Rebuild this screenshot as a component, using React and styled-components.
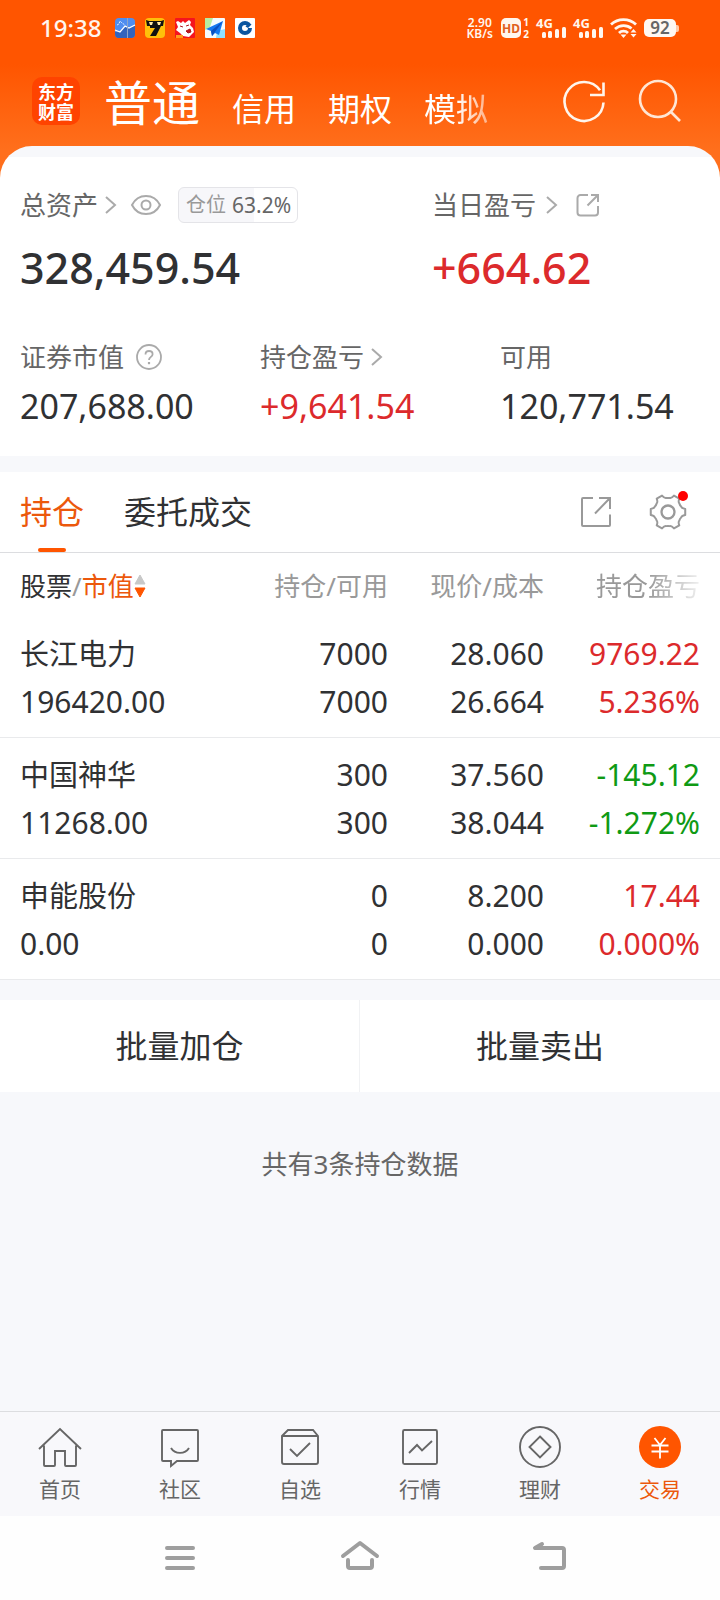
import React from "react";
import styled, { createGlobalStyle, css } from "styled-components";

const color = {
  brand: "#ff5500",
  brandText: "#ec580c",
  ink: "#303133",
  label: "#666666",
  muted: "#999999",
  icon: "#aaaaaa",
  up: "#dc2a2c",
  down: "#0f9a14",
  page: "#f7f8fb",
  line: "#dcdde0",
};

const tones = { up: color.up, down: color.down, ink: color.ink };

const GlobalStyle = createGlobalStyle`
  * { box-sizing: border-box; }
  body {
    margin: 0;
    background: ${color.page};
    color: ${color.ink};
    font-family: "Noto Sans", "Noto Sans CJK SC", sans-serif;
  }
  button, a { font: inherit; color: inherit; }
  svg { display: block; flex: none; overflow: visible; }
`;

const Screen = styled.div`
  display: flex;
  flex-direction: column;
  min-height: 100vh;
`;

/* ---------- header ---------- */

const Hero = styled.div`
  background: linear-gradient(#ff5500 64px, #ff6f1c 150px);
`;

const StatusBar = styled.div`
  display: flex;
  align-items: center;
  justify-content: space-between;
  height: 56px;
  padding: 0 40px;
  color: #fff6ee;
`;

const StatusGroup = styled.div`
  display: flex;
  align-items: center;
  gap: ${(p) => p.$gap}px;
`;

const Clock = styled.span`
  margin-right: 4px;
  font-size: 24px;
  font-weight: 500;
  line-height: 28px;
`;

const Speed = styled.div`
  display: flex;
  flex-direction: column;
  align-items: center;
  margin-right: 2px;
  font-size: 12px;
  font-weight: 600;
  line-height: 11px;
`;

const Battery = styled.div`
  position: relative;
  width: 32px;
  height: 18px;
  margin-right: 4px;
  border-radius: 5px;
  background: #fff8f2;
  color: #666;
  font-size: 17px;
  font-weight: 600;
  line-height: 18px;
  text-align: center;

  &::after {
    content: "";
    position: absolute;
    left: 32px;
    top: 6px;
    width: 3px;
    height: 7px;
    border-radius: 0 2px 2px 0;
    background: #ffc9a8;
  }
`;

const TitleBar = styled.header`
  display: flex;
  align-items: center;
  height: 90px;
  padding: 0 38px 0 32px;
  color: #fff;
`;

const Logo = styled.div`
  width: 48px;
  height: 48px;
  padding-top: 4px;
  border-radius: 10px;
  background: #ff4300;
  font-family: "Noto Sans CJK SC", sans-serif;
  font-size: 18px;
  font-weight: 700;
  line-height: 20px;
  text-align: center;
`;

const AccountTabs = styled.nav`
  display: flex;
  align-items: baseline;
  gap: 32px;
  margin-left: 24px;
  padding-top: 10px;
`;

const AccountTab = styled.button`
  padding: 0;
  border: 0;
  background: none;
  font-size: ${(p) => (p.$active ? 48 : 32)}px;
  line-height: 48px;
  white-space: nowrap;
  ${(p) =>
    p.$fade &&
    css`
      mask-image: linear-gradient(to right, #000 50%, rgba(0, 0, 0, 0.5));
    `}
`;

const IconButton = styled.button`
  position: relative;
  padding: 0;
  border: 0;
  background: none;
`;

const TitleActions = styled.div`
  display: flex;
  align-items: center;
  gap: 32px;
  margin-left: auto;
`;

const SheetTop = styled.div`
  height: 32px;
  border-radius: 32px 32px 0 0;
  background: linear-gradient(${color.page} 11px, #fff 11px);
`;

/* ---------- assets ---------- */

const Assets = styled.section`
  padding-bottom: 21px;
  background: #fff;
`;

const AssetRow = styled.dl`
  display: grid;
  grid-template-columns: ${(p) => p.$columns};
  margin: 0;
  padding-bottom: ${(p) => p.$space || 0}px;
`;

const Asset = styled.div`
  padding-left: ${(p) => (p.$flush ? 0 : 20)}px;
`;

const AssetLabel = styled.dt`
  display: flex;
  align-items: center;
  height: ${(p) => (p.$tall ? 54 : 40)}px;
  color: ${color.label};
  font-size: 26px;
  line-height: 40px;
`;

const AssetValue = styled.dd`
  margin: 0;
  color: ${(p) => tones[p.$tone || "ink"]};
  font-size: ${(p) => (p.$large ? 43 : 34)}px;
  font-weight: ${(p) => (p.$large ? 500 : 400)};
  line-height: ${(p) => (p.$large ? 72 : 58)}px;
`;

const Spaced = styled.span`
  display: flex;
  margin-left: ${(p) => p.$by}px;
`;

const PositionPill = styled.span`
  display: flex;
  align-items: center;
  gap: 6px;
  height: 36px;
  margin-left: 17px;
  padding: 0 6px 0 7px;
  border: 1px solid #e4e4e8;
  border-radius: 6px;
  background: linear-gradient(to right, #f7f7fa 63.2%, #fff 63.2%);
  color: ${color.muted};
  font-size: 20px;
  line-height: 32px;

  b {
    color: ${color.label};
    font-size: 21px;
    font-weight: 400;
  }
`;

/* ---------- holdings ---------- */

const Holdings = styled.section`
  margin-top: 16px;
  background: #fff;
`;

const TabBar = styled.div`
  display: flex;
  align-items: stretch;
  gap: 40px;
  height: 81px;
  padding: 0 33px 0 20px;
  border-bottom: 1px solid ${color.line};
`;

const Tab = styled.button`
  position: relative;
  padding: 0;
  border: 0;
  background: none;
  color: ${(p) => (p.$active ? color.brandText : color.ink)};
  font-size: 32px;
  line-height: 80px;

  &::after {
    content: "";
    position: absolute;
    left: calc(50% - 14px);
    bottom: 0;
    width: 28px;
    height: 4px;
    border-radius: 2px;
    background: ${(p) => (p.$active ? color.brand : "none")};
  }
`;

const TabActions = styled.div`
  display: flex;
  align-items: center;
  gap: 37px;
  margin-left: auto;
`;

const Dot = styled.span`
  position: absolute;
  top: -2px;
  right: -1px;
  width: 10px;
  height: 10px;
  border-radius: 50%;
  background: #ff0000;
`;

const Table = styled.table`
  width: 100%;
  border-collapse: separate;
  border-spacing: 0;
  table-layout: fixed;
`;

const HeadCell = styled.th`
  width: ${(p) => p.$width || "auto"};
  height: 64px;
  padding: 2px ${(p) => (p.$last ? 20 : 0)}px 0 ${(p) => (p.$first ? 20 : 0)}px;
  color: ${color.muted};
  font-size: 26px;
  font-weight: 400;
  line-height: 40px;
  text-align: ${(p) => (p.$first ? "left" : "right")};
  white-space: nowrap;
`;

const FadingLabel = styled.span`
  mask-image: linear-gradient(to right, #000 50%, rgba(0, 0, 0, 0.15));
`;

const SortButton = styled.button`
  display: flex;
  align-items: center;
  padding: 0;
  border: 0;
  background: none;
  color: ${color.muted};

  em {
    color: ${color.ink};
    font-style: normal;
  }
  strong {
    color: ${color.brandText};
    font-weight: 400;
  }
`;

const Cell = styled.td`
  padding: 13px ${(p) => (p.$last ? 20 : 0)}px 11px ${(p) => (p.$first ? 20 : 0)}px;
  border-bottom: 1px solid #e9eaec;
  color: ${(p) => tones[p.$tone || "ink"]};
  line-height: 48px;
  text-align: ${(p) => (p.$first ? "left" : "right")};
  white-space: nowrap;
`;

const Line = styled.div`
  height: 48px;
  font-size: ${(p) => (p.$name ? 29 : 30)}px;
`;

const BatchBar = styled.div`
  display: grid;
  grid-template-columns: 1fr 1fr;
  margin-top: 20px;
  background: #fff;
`;

const BatchButton = styled.button`
  padding: 0;
  border: 0;
  border-right: ${(p) => (p.$divided ? "1px solid #f1f2f4" : "0")};
  background: none;
  font-size: 32px;
  line-height: 92px;
`;

const Summary = styled.p`
  margin: 52px 0;
  color: ${color.label};
  font-size: 26px;
  line-height: 40px;
  text-align: center;
`;

/* ---------- bottom ---------- */

const Bottom = styled.div`
  margin-top: auto;
`;

const TabNav = styled.nav`
  display: grid;
  grid-template-columns: repeat(6, 1fr);
  height: 105px;
  padding-top: 14px;
  border-top: 1px solid ${color.line};
  background: #f8f8fb;
`;

const NavLink = styled.a`
  display: flex;
  flex-direction: column;
  align-items: center;
  gap: 5px;
  color: ${(p) => (p.$active ? color.brandText : color.label)};
  font-size: 21px;
  line-height: 32px;
  text-decoration: none;
`;

const SystemNav = styled.nav`
  display: grid;
  grid-template-columns: repeat(3, 1fr);
  align-items: end;
  justify-items: center;
  height: 84px;
  padding: 0 12.5% 30px;
  background: #fefefe;
`;

/* ---------- drawings ---------- */

const Chevron = () => (
  <svg width="12" height="18" viewBox="0 0 12 18" fill="none" stroke={color.icon} strokeWidth="2">
    <path d="M1 1l9 8-9 8" />
  </svg>
);

const Eye = () => (
  <svg width="30" height="22" viewBox="0 0 30 22" fill="none" stroke={color.icon} strokeWidth="2">
    <path d="M1 11C4 5 9 2 15 2s11 3 14 9c-3 6-8 9-14 9S4 17 1 11z" />
    <circle cx="15" cy="11" r="4.5" />
  </svg>
);

const Help = () => (
  <svg width="26" height="26" viewBox="0 0 26 26" fill="none" stroke={color.icon} strokeWidth="1.8">
    <circle cx="13" cy="13" r="12" />
    <path d="M9.5 10.5C9.5 8 11 7 13 7s3.600 1.200 3.600 3.300c0 2.600-3.600 2.700-3.600 5.700" />
    <path d="M13 18v2.200" strokeWidth="2.200" />
  </svg>
);

const ShareSmall = () => (
  <svg width="24" height="24" viewBox="0 0 24 24" fill="none" stroke={color.icon} strokeWidth="2">
    <path d="M12 2H4.500A3 3 0 0 0 1.500 5v14.500a3 3 0 0 0 3 3H19a3 3 0 0 0 3-3V13M15 2h7v7M22 2L11.500 12.500" />
  </svg>
);

const ShareLarge = () => (
  <svg width="32" height="32" viewBox="0 0 32 32" fill="none" stroke={color.muted} strokeWidth="2">
    <path d="M13 2H3a1 1 0 0 0-1 1v26a1 1 0 0 0 1 1h26a1 1 0 0 0 1-1V18.500M19 2h11v11M30 2L15 17.500" />
  </svg>
);

const polar = (degrees, radius) => {
  const a = (degrees * Math.PI) / 180;
  return `${(19 + radius * Math.cos(a)).toFixed(2)} ${(19 + radius * Math.sin(a)).toFixed(2)}`;
};

const gearPath =
  `M${polar(-10, 17.5)}` +
  [0, 60, 120, 180, 240, 300]
    .map((a) => `L${polar(a + 10, 17.5)}Q${polar(a + 16, 14)} ${polar(a + 22, 14.3)}Q${polar(a + 30, 13.6)} ${polar(a + 38, 14.3)}Q${polar(a + 44, 14)} ${polar(a + 50, 17.5)}`)
    .join("") +
  "Z";

const Gear = () => (
  <svg width="38" height="38" viewBox="0 0 38 38" fill="none" stroke={color.muted} strokeWidth="2" strokeLinejoin="round">
    <path d={gearPath} />
    <circle cx="19" cy="19" r="6.500" strokeWidth="2.300" />
  </svg>
);

const SortArrows = () => (
  <svg width="12" height="24" viewBox="0 0 12 24">
    <path d="M6 1l5 9H1z" fill="#c8c8c8" stroke="#c8c8c8" strokeLinejoin="round" />
    <path d="M6 23l5-9H1z" fill={color.brand} stroke={color.brand} strokeLinejoin="round" />
  </svg>
);

const Refresh = () => (
  <svg width="44" height="44" viewBox="0 0 44 44" fill="none" stroke="#fff5ec" strokeWidth="2.600">
    <path d="M38 11.300A19.500 19.500 0 1 0 41.500 23.500" />
    <path d="M41.500 3.500v12.500H28" />
  </svg>
);

const Search = () => (
  <svg width="44" height="44" viewBox="0 0 44 44" fill="none" stroke="#ffe6d4" strokeWidth="2.600">
    <circle cx="20" cy="20" r="18" />
    <path d="M32.500 32.500L42 42" />
  </svg>
);

const AppIcons = () => (
  <>
    <svg width="20" height="20" viewBox="0 0 20 20">
      <rect width="20" height="20" rx="4" fill="#4f8df0" />
      <path d="M0 14l5 0 5-5 4 1 6-3v9a4 4 0 0 1-4 4H4a4 4 0 0 1-4-4z" fill="#3263bd" />
      <path d="M0 12l5 2 5-6 4 2 6-3" stroke="#fff" fill="none" strokeWidth="1.200" />
      <path d="M2 7l2-1 1-3 2 2 3 2" stroke="#dceaff" fill="none" strokeDasharray="2 1" />
      <path d="M12.500 0v20" stroke="#8fa6c8" />
    </svg>
    <svg width="20" height="20" viewBox="0 0 20 20">
      <rect width="20" height="20" rx="4" fill="#ffbf0a" />
      <path d="M1 2l3 1h12l3-1-1 6h-2l-5 10H5l5-8H5v-2H2z" fill="#111" />
      <path d="M4 4h4l-1 3H5zM12 4h4l-1 3h-2z" fill="#ffe9a8" />
    </svg>
    <svg width="20" height="20" viewBox="0 0 20 20">
      <rect width="20" height="20" rx="1" fill="#f5141e" />
      <path d="M1 4l2-1 3 2 2-2 2 2 4-3 2 2-1 3 3 3 1 4-2 2-3 3-6-1-3-3-4-3 2-3z" fill="#fff" />
      <path d="M5 8l3 1M11 8l3-1M11 13l4-2 1 3-3 1z" stroke="#b0141c" fill="#c0141c" />
      <path d="M1 17h7v3H1z" fill="#ff9a1e" />
    </svg>
    <svg width="20" height="20" viewBox="0 0 20 20">
      <rect width="20" height="20" rx="1" fill="#f4fbff" />
      <path d="M0 0h8L5 9 0 12z" fill="#b6eda0" />
      <path d="M12 13l8-2v9h-9z" fill="#8fe0ff" />
      <path d="M18 3L1 11l5 2 1 5 3-3 4 2z" fill="#1478f0" />
      <path d="M18 3L6 13l1 5z" fill="#0a4fc0" />
    </svg>
    <svg width="20" height="20" viewBox="0 0 20 20">
      <rect width="20" height="20" rx="1" fill="#fff" />
      <circle cx="10" cy="10" r="5" fill="none" stroke="#0a55a0" strokeWidth="4" />
      <path d="M10 10l7-7 2 7z" fill="#fff" />
      <path d="M10.500 8.500L14 4.500l2.500 2-3.500 3.500z" fill="#0a55a0" />
    </svg>
  </>
);

const statusText = { fontFamily: "Noto Sans", fontWeight: 700 };

const HdIcon = () => (
  <svg width="29" height="20" viewBox="0 0 29 20" fill="#fff6ee">
    <rect width="20" height="20" rx="5" />
    <text x="10" y="14.500" fontSize="12" textAnchor="middle" fill="#e0601c" {...statusText}>HD</text>
    <text x="25" y="8" fontSize="10" textAnchor="middle" {...statusText}>1</text>
    <text x="25" y="19.500" fontSize="10" textAnchor="middle" {...statusText}>2</text>
  </svg>
);

const Signal = () => (
  <svg width="31" height="20" viewBox="0 0 31 20" fill="#fff6ee">
    <text x="0" y="9.500" fontSize="13" {...statusText}>4G</text>
    <rect x="6" y="14" width="4" height="6" rx="1.500" />
    <rect x="12" y="13" width="4" height="7" rx="1.500" />
    <rect x="19" y="11" width="4" height="9" rx="1.500" />
    <rect x="26" y="9" width="4" height="11" rx="1.500" />
  </svg>
);

const Wifi = () => (
  <svg width="28" height="20" viewBox="0 0 28 20" fill="none" stroke="#fff6ee" strokeWidth="2.800">
    <path d="M1 6.500C8 0 19 0 26 6.500M5 11C10 6.500 17 6.500 21.500 10.500M9 15C11.500 12.500 15.500 12.500 18 15" />
    <path d="M10.500 16.500h6L13.500 20zM20.500 14.500h6L23.500 11zM20.500 16h6L23.500 19.500z" fill="#fff6ee" stroke="none" />
  </svg>
);

const navShapes = {
  home: (
    <path d="M1 23L22 3l21 20M6 19.500V39a1 1 0 0 0 1 1h9a1 1 0 0 0 1-1V25h10v14a1 1 0 0 0 1 1h9a1 1 0 0 0 1-1V19.500" />
  ),
  chat: (
    <>
      <path d="M5 4h34a1 1 0 0 1 1 1v29a1 1 0 0 1-1 1H19l-6 5v-5H5a1 1 0 0 1-1-1V5a1 1 0 0 1 1-1z" />
      <path d="M13 22c4 6.500 14 6.500 18 0" />
    </>
  ),
  box: (
    <>
      <path d="M4 10l6-6h25l5 6v26a2 2 0 0 1-2 2H6a2 2 0 0 1-2-2zM4 10h36" />
      <path d="M12 23l7 7 13-13" />
    </>
  ),
  chart: (
    <>
      <rect x="5" y="4" width="34" height="34" rx="1.500" />
      <path d="M11 27l8-8 5 5.500L34 15" />
    </>
  ),
  coin: (
    <>
      <circle cx="22" cy="21" r="20" />
      <path d="M22 10.500L32.500 21 22 31.500 11.500 21z" />
    </>
  ),
  trade: (
    <>
      <circle cx="22" cy="21" r="21" fill={color.brand} stroke="none" />
      <path d="M16.500 12l5.500 7 5.500-7M13.500 19.500h17M13.500 25.500h17M22 19v13.500" stroke="#fff" strokeWidth="1.800" />
    </>
  ),
};

const NavIcon = ({ shape }) => (
  <svg width="44" height="42" viewBox="0 0 44 42" fill="none" stroke={color.label} strokeWidth="1.900">
    {navShapes[shape]}
  </svg>
);

/* ---------- data ---------- */

const holdings = [
  { name: "长江电力", value: "196420.00", held: "7000", free: "7000", price: "28.060", cost: "26.664", gain: "9769.22", rate: "5.236%", tone: "up" },
  { name: "中国神华", value: "11268.00", held: "300", free: "300", price: "37.560", cost: "38.044", gain: "-145.12", rate: "-1.272%", tone: "down" },
  { name: "申能股份", value: "0.00", held: "0", free: "0", price: "8.200", cost: "0.000", gain: "17.44", rate: "0.000%", tone: "up" },
];

const navItems = [
  ["home", "首页"],
  ["chat", "社区"],
  ["box", "自选"],
  ["chart", "行情"],
  ["coin", "理财"],
  ["trade", "交易"],
];

export default function App() {
  return (
    <Screen>
      <GlobalStyle />
      <Hero>
        <StatusBar>
          <StatusGroup $gap={10}>
            <Clock>19:38</Clock>
            <AppIcons />
          </StatusGroup>
          <StatusGroup $gap={6}>
            <Speed>
              <span>2.90</span>
              <span>KB/s</span>
            </Speed>
            <HdIcon />
            <Signal />
            <Signal />
            <Wifi />
            <Battery>92</Battery>
          </StatusGroup>
        </StatusBar>
        <TitleBar>
          <Logo>东方<br />财富</Logo>
          <AccountTabs>
            <AccountTab $active>普通</AccountTab>
            <AccountTab>信用</AccountTab>
            <AccountTab>期权</AccountTab>
            <AccountTab $fade>模拟</AccountTab>
          </AccountTabs>
          <TitleActions>
            <IconButton aria-label="刷新"><Refresh /></IconButton>
            <IconButton aria-label="搜索"><Search /></IconButton>
          </TitleActions>
        </TitleBar>
        <SheetTop />
      </Hero>

      <Assets>
        <AssetRow $columns="3fr 2fr" $space={33}>
          <Asset>
            <AssetLabel $tall>
              总资产
              <Spaced $by={7}><Chevron /></Spaced>
              <Spaced $by={14}><Eye /></Spaced>
              <PositionPill>仓位 <b>63.2%</b></PositionPill>
            </AssetLabel>
            <AssetValue $large>328,459.54</AssetValue>
          </Asset>
          <Asset $flush>
            <AssetLabel $tall>
              当日盈亏
              <Spaced $by={10}><Chevron /></Spaced>
              <Spaced $by={18}><ShareSmall /></Spaced>
            </AssetLabel>
            <AssetValue $large $tone="up">+664.62</AssetValue>
          </Asset>
        </AssetRow>
        <AssetRow $columns="repeat(3, 1fr)">
          <Asset>
            <AssetLabel>
              证券市值
              <Spaced $by={12}><Help /></Spaced>
            </AssetLabel>
            <AssetValue>207,688.00</AssetValue>
          </Asset>
          <Asset>
            <AssetLabel>
              持仓盈亏
              <Spaced $by={7}><Chevron /></Spaced>
            </AssetLabel>
            <AssetValue $tone="up">+9,641.54</AssetValue>
          </Asset>
          <Asset>
            <AssetLabel>可用</AssetLabel>
            <AssetValue>120,771.54</AssetValue>
          </Asset>
        </AssetRow>
      </Assets>

      <Holdings>
        <TabBar>
          <Tab $active>持仓</Tab>
          <Tab>委托成交</Tab>
          <TabActions>
            <IconButton aria-label="分享"><ShareLarge /></IconButton>
            <IconButton aria-label="设置"><Gear /><Dot /></IconButton>
          </TabActions>
        </TabBar>
        <Table>
          <thead>
            <tr>
              <HeadCell $first>
                <SortButton>
                  <em>股票</em>/<strong>市值</strong>
                  <SortArrows />
                </SortButton>
              </HeadCell>
              <HeadCell $width="156px">持仓/可用</HeadCell>
              <HeadCell $width="156px">现价/成本</HeadCell>
              <HeadCell $width="176px" $last><FadingLabel>持仓盈亏</FadingLabel></HeadCell>
            </tr>
          </thead>
          <tbody>
            {holdings.map((h) => (
              <tr key={h.name}>
                <Cell $first><Line $name>{h.name}</Line><Line>{h.value}</Line></Cell>
                <Cell><Line>{h.held}</Line><Line>{h.free}</Line></Cell>
                <Cell><Line>{h.price}</Line><Line>{h.cost}</Line></Cell>
                <Cell $last $tone={h.tone}><Line>{h.gain}</Line><Line>{h.rate}</Line></Cell>
              </tr>
            ))}
          </tbody>
        </Table>
      </Holdings>

      <BatchBar>
        <BatchButton $divided>批量加仓</BatchButton>
        <BatchButton>批量卖出</BatchButton>
      </BatchBar>
      <Summary>共有3条持仓数据</Summary>

      <Bottom>
        <TabNav>
          {navItems.map(([shape, label]) => (
            <NavLink key={shape} href={`#${shape}`} $active={shape === "trade"}>
              <NavIcon shape={shape} />
              {label}
            </NavLink>
          ))}
        </TabNav>
        <SystemNav>
          <IconButton aria-label="最近任务">
            <svg width="30" height="24" viewBox="0 0 30 24" stroke="#9e9e9e" strokeWidth="4" strokeLinecap="round">
              <path d="M2 2h26M2 12h26M2 22h26" />
            </svg>
          </IconButton>
          <IconButton aria-label="主屏幕">
            <svg width="38" height="30" viewBox="0 0 38 30" fill="none" stroke="#9e9e9e" strokeWidth="4" strokeLinecap="round" strokeLinejoin="round">
              <path d="M2 16L19 3l17 13M7 20v6a2 2 0 0 0 2 2h20a2 2 0 0 0 2-2v-6" />
            </svg>
          </IconButton>
          <IconButton aria-label="返回">
            <svg width="52" height="30" viewBox="-18 0 52 30" fill="none" stroke="#9e9e9e" strokeWidth="4" strokeLinecap="round" strokeLinejoin="round">
              <path d="M10 4L3 8h27a2 2 0 0 1 2 2v16a2 2 0 0 1-2 2H9" />
            </svg>
          </IconButton>
        </SystemNav>
      </Bottom>
    </Screen>
  );
}
